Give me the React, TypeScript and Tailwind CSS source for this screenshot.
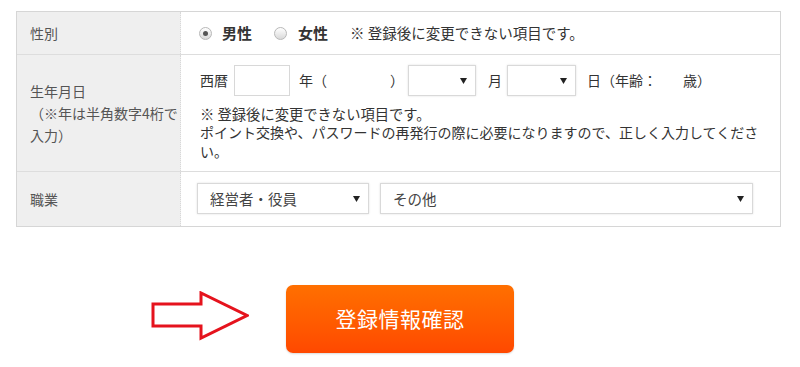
import React from "react";

const font = { fontFamily: '"Noto Sans CJK JP", "Noto Sans", sans-serif' };

const Arrow: React.FC = () => (
  <svg width="7" height="6" viewBox="0 0 7 6" className="shrink-0">
    <polygon points="0,0 7,0 3.5,6" fill="#222" />
  </svg>
);

interface SelectBoxProps {
  width: string;
  value?: string;
}

const SelectBox: React.FC<SelectBoxProps> = ({ width, value }) => (
  <div
    className={`${width} h-[31px] flex items-center justify-between pl-[12px] pr-[8px] bg-white border border-[#d9d9d9] shadow-[0_0_2px_rgba(0,0,0,0.12)] text-[14.5px] text-[#444] shrink-0`}
  >
    <span>{value}</span>
    <Arrow />
  </div>
);

const Radio: React.FC<{ checked?: boolean }> = ({ checked }) => (
  <span className="w-[13px] h-[13px] rounded-full border border-[#b8b8b8] bg-gradient-to-b from-white to-[#d9d9d9] flex items-center justify-center shrink-0">
    {checked && <span className="w-[5px] h-[5px] rounded-full bg-[#555]" />}
  </span>
);

const Label: React.FC<{ children: React.ReactNode }> = ({ children }) => (
  <div className="w-[164px] shrink-0 bg-[#efefef] border-r border-dotted border-r-[#d8d8d8] pl-[13px] pr-0 flex items-center text-[14px] leading-[22px] text-[#555]">
    <div>{children}</div>
  </div>
);

export default function App() {
  return (
    <div className="w-[800px] h-[367px] bg-white pt-[11px]" style={font}>
      {/* フォーム */}
      <div className="ml-[16px] w-[765px] border border-[#d6d6d6]">
        {/* 性別 */}
        <div className="flex border-b border-[#dddddd]">
          <Label>性別</Label>
          <div className="flex-1 flex items-center pl-[18px] py-[11px] leading-[20px] text-[14.5px] text-[#333]">
            <Radio checked />
            <span className="ml-[10px] font-bold text-[15px]">男性</span>
            <span className="ml-[22px]"><Radio /></span>
            <span className="ml-[11px] font-bold text-[15px]">女性</span>
            <span className="ml-[22px]">※ 登録後に変更できない項目です。</span>
          </div>
        </div>

        {/* 生年月日 */}
        <div className="flex border-b border-[#dddddd]">
          <Label>
            <div className="text-[14px]">生年月日</div>
            <div>（※年は半角数字4桁で入力）</div>
          </Label>
          <div className="flex-1 pl-[19px] pr-[10px] pt-[10px] pb-[10px] text-[14px] text-[#333]">
            <div className="flex items-center h-[31px] whitespace-nowrap">
              <span>西暦</span>
              <div className="ml-[6px] w-[56px] h-[31px] border border-[#d8d8d8] bg-white" />
              <span className="ml-[9px]">年（</span>
              <span className="w-[63px]" />
              <span>）</span>
              <div className="ml-[4px]">
                <SelectBox width="w-[68px]" />
              </div>
              <span className="ml-[12px]">月</span>
              <div className="ml-[5px]">
                <SelectBox width="w-[69px]" />
              </div>
              <span className="ml-[11px]">日（年齢：</span>
              <span className="w-[26px]" />
              <span>歳）</span>
            </div>
            <div className="mt-[8px] leading-[19px]">
              <div className="text-[14.3px]">※ 登録後に変更できない項目です。</div>
              <div>ポイント交換や、パスワードの再発行の際に必要になりますので、正しく入力してください。</div>
            </div>
          </div>
        </div>

        {/* 職業 */}
        <div className="flex">
          <Label>職業</Label>
          <div className="flex-1 flex items-center gap-[11px] pl-[16px] pt-[11px] pb-[12px]">
            <SelectBox width="w-[172px]" value="経営者・役員" />
            <SelectBox width="w-[373px]" value="その他" />
          </div>
        </div>
      </div>

      {/* 確認ボタン */}
      <div className="flex justify-center items-start mt-[58px]">
        <svg width="98" height="50" viewBox="0 0 98 50" className="mt-[6px] shrink-0">
          <polygon
            points="2,13 50,13 50,2 96,24.5 50,47 50,35 2,35"
            fill="white"
            stroke="#e5131d"
            strokeWidth="3"
            strokeLinejoin="miter"
          />
        </svg>
        <button className="ml-[37px] w-[228px] h-[68px] rounded-[7px] bg-gradient-to-b from-[#ff6f00] to-[#ff4800] shadow-[0_1px_2px_rgba(0,0,0,0.15)] text-white text-[21px] tracking-[0.5px]">
          登録情報確認
        </button>
        <div className="w-[135px] shrink-0" />
      </div>
    </div>
  );
}
